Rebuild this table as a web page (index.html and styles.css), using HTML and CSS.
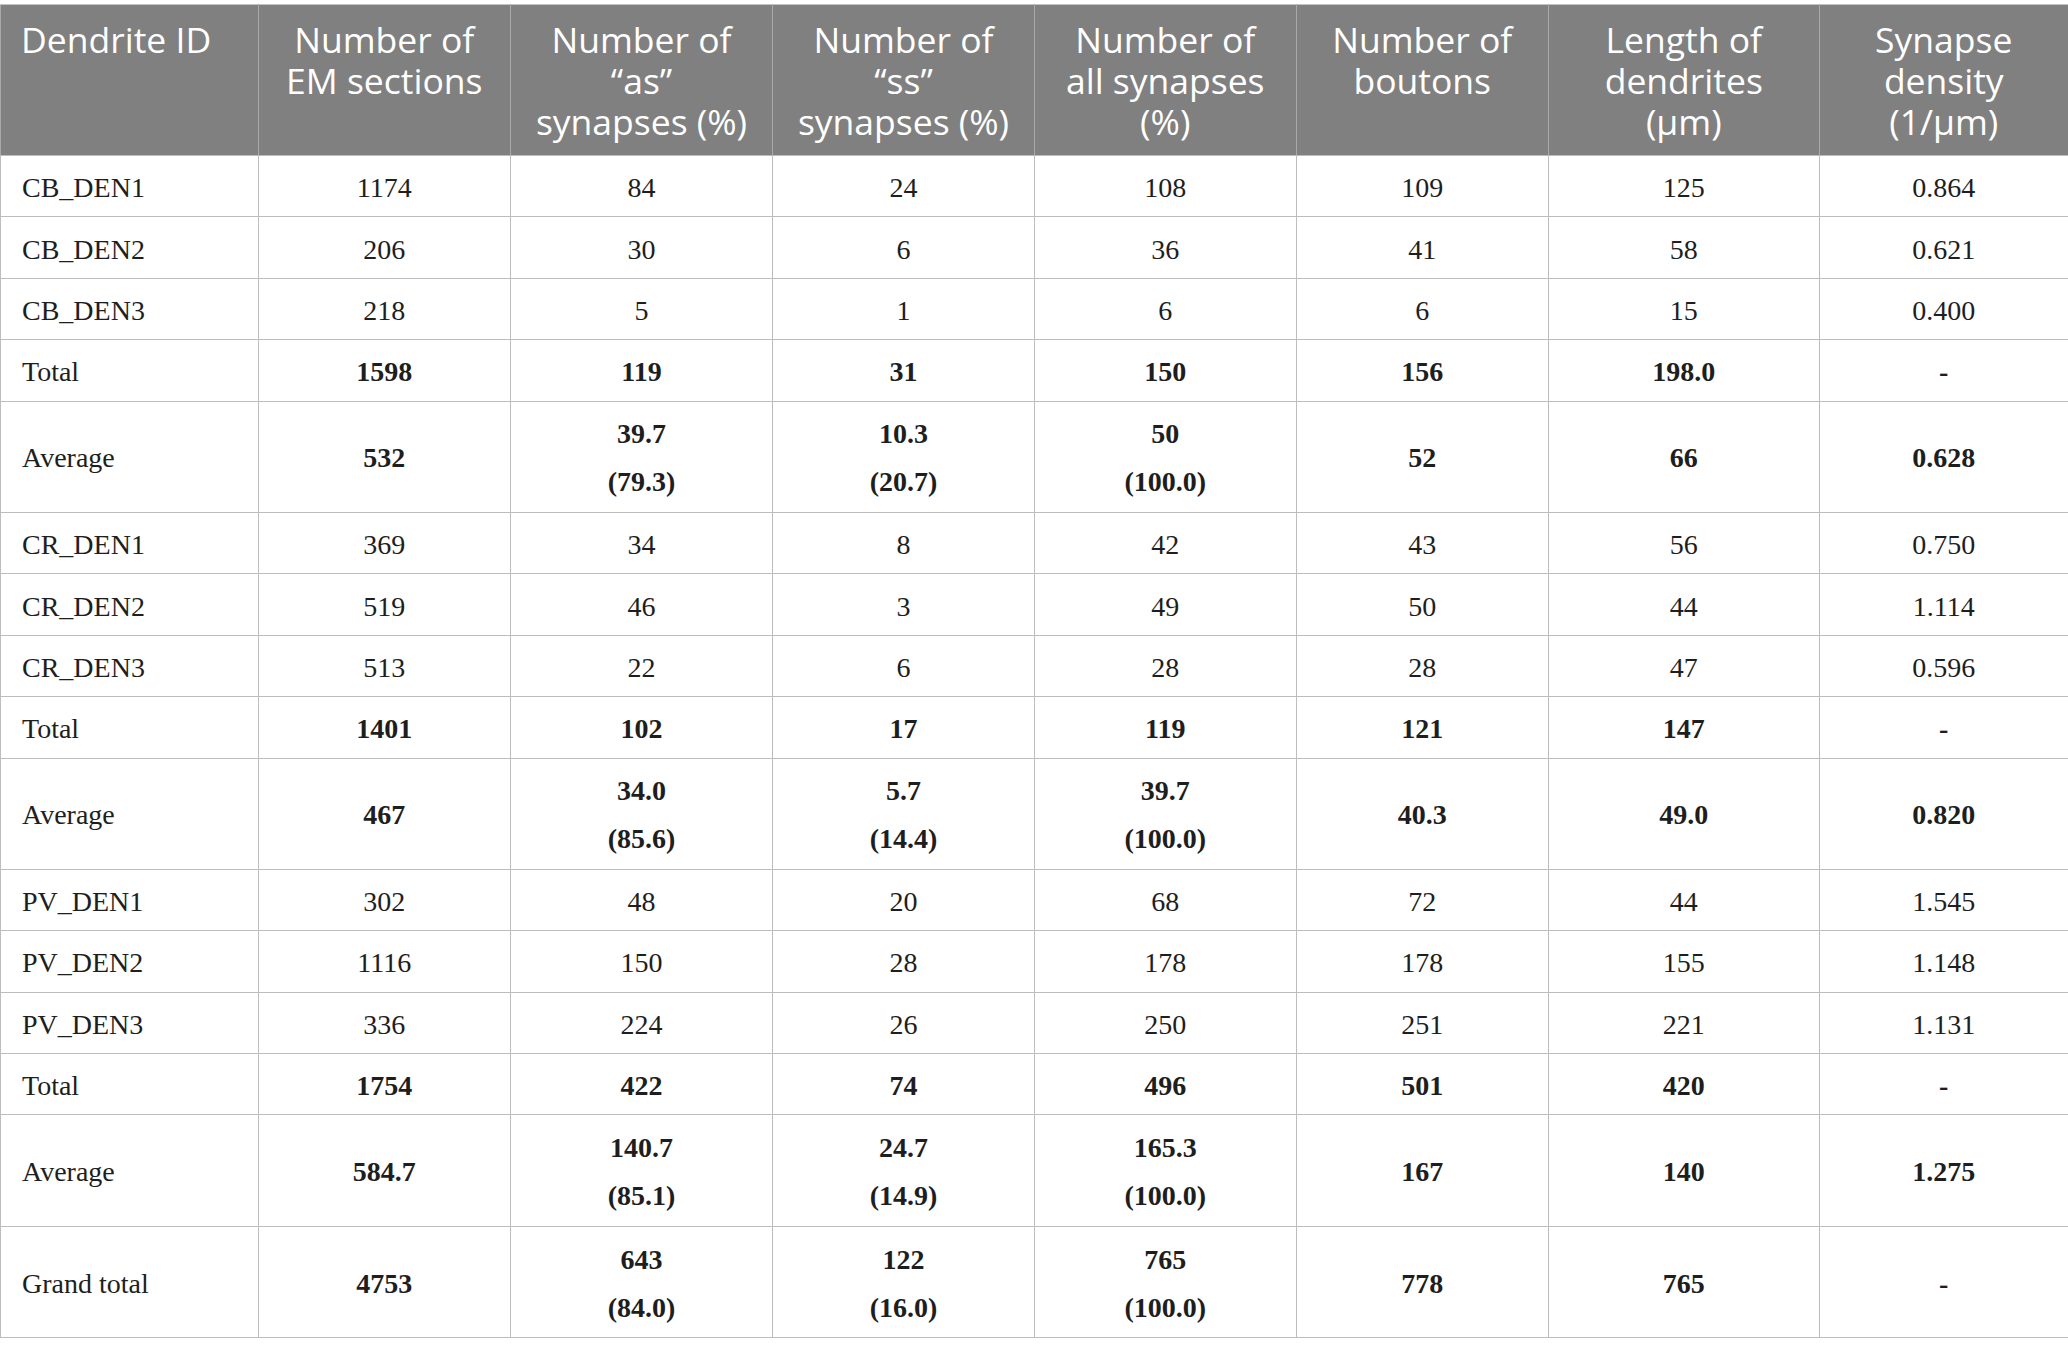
FILE: index.html
```html
<!DOCTYPE html>
<html lang="en">
<head>
<meta charset="utf-8">
<title>Dendrite synapses</title>
<link rel="stylesheet" href="styles.css">
</head>
<body>
<table class="data">
  <colgroup>
    <col class="c1"><col class="c2"><col class="c3"><col class="c4"><col class="c5"><col class="c6"><col class="c7"><col class="c8">
  </colgroup>
  <thead>
    <tr>
      <th class="first">Dendrite ID</th>
      <th>Number of<br>EM sections</th>
      <th>Number of<br>“as”<br>synapses (%)</th>
      <th>Number of<br>“ss”<br>synapses (%)</th>
      <th>Number of<br>all synapses<br>(%)</th>
      <th>Number of<br>boutons</th>
      <th>Length of<br>dendrites<br>(μm)</th>
      <th>Synapse<br>density<br>(1/μm)</th>
    </tr>
  </thead>
  <tbody>
    <tr class="single"><td class="first">CB_DEN1</td><td>1174</td><td>84</td><td>24</td><td>108</td><td>109</td><td>125</td><td>0.864</td></tr>
    <tr class="single"><td class="first">CB_DEN2</td><td>206</td><td>30</td><td>6</td><td>36</td><td>41</td><td>58</td><td>0.621</td></tr>
    <tr class="single"><td class="first">CB_DEN3</td><td>218</td><td>5</td><td>1</td><td>6</td><td>6</td><td>15</td><td>0.400</td></tr>
    <tr class="single sum"><td class="first">Total</td><td>1598</td><td>119</td><td>31</td><td>150</td><td>156</td><td>198.0</td><td>-</td></tr>
    <tr class="double sum"><td class="first">Average</td><td>532</td><td>39.7<br>(79.3)</td><td>10.3<br>(20.7)</td><td>50<br>(100.0)</td><td>52</td><td>66</td><td>0.628</td></tr>
    <tr class="single"><td class="first">CR_DEN1</td><td>369</td><td>34</td><td>8</td><td>42</td><td>43</td><td>56</td><td>0.750</td></tr>
    <tr class="single"><td class="first">CR_DEN2</td><td>519</td><td>46</td><td>3</td><td>49</td><td>50</td><td>44</td><td>1.114</td></tr>
    <tr class="single"><td class="first">CR_DEN3</td><td>513</td><td>22</td><td>6</td><td>28</td><td>28</td><td>47</td><td>0.596</td></tr>
    <tr class="single sum"><td class="first">Total</td><td>1401</td><td>102</td><td>17</td><td>119</td><td>121</td><td>147</td><td>-</td></tr>
    <tr class="double sum"><td class="first">Average</td><td>467</td><td>34.0<br>(85.6)</td><td>5.7<br>(14.4)</td><td>39.7<br>(100.0)</td><td>40.3</td><td>49.0</td><td>0.820</td></tr>
    <tr class="single"><td class="first">PV_DEN1</td><td>302</td><td>48</td><td>20</td><td>68</td><td>72</td><td>44</td><td>1.545</td></tr>
    <tr class="single"><td class="first">PV_DEN2</td><td>1116</td><td>150</td><td>28</td><td>178</td><td>178</td><td>155</td><td>1.148</td></tr>
    <tr class="single"><td class="first">PV_DEN3</td><td>336</td><td>224</td><td>26</td><td>250</td><td>251</td><td>221</td><td>1.131</td></tr>
    <tr class="single sum"><td class="first">Total</td><td>1754</td><td>422</td><td>74</td><td>496</td><td>501</td><td>420</td><td>-</td></tr>
    <tr class="double sum"><td class="first">Average</td><td>584.7</td><td>140.7<br>(85.1)</td><td>24.7<br>(14.9)</td><td>165.3<br>(100.0)</td><td>167</td><td>140</td><td>1.275</td></tr>
    <tr class="double sum"><td class="first">Grand total</td><td>4753</td><td>643<br>(84.0)</td><td>122<br>(16.0)</td><td>765<br>(100.0)</td><td>778</td><td>765</td><td>-</td></tr>
  </tbody>
</table>
</body>
</html>
```

FILE: styles.css
```css
html, body {
  margin: 0;
  padding: 0;
  background: #ffffff;
}

body {
  padding-top: 4px;
}

.data {
  width: 2068px;
  table-layout: fixed;
  border-collapse: collapse;
  font-family: "Liberation Serif", "Times New Roman", serif;
  color: #1e1e1e;
}

.c1 { width: 257.5px; }
.c2 { width: 252.5px; }
.c3 { width: 262px; }
.c4 { width: 262px; }
.c5 { width: 261.5px; }
.c6 { width: 252.5px; }
.c7 { width: 270.5px; }
.c8 { width: 249.5px; }

.data th {
  background: #808080;
  color: #ffffff;
  font-family: "Open Sans", "Noto Sans", sans-serif;
  font-weight: 400;
  font-size: 35.5px;
  line-height: 41px;
  text-align: center;
  vertical-align: top;
  padding: 14px 18px 13px;
  height: 123px;
  white-space: nowrap;
  border-top: 1px solid #c4c4c4;
  border-left: 1px solid #a9a9a9;
  border-right: 1px solid #a9a9a9;
  border-bottom: 1px solid #bcbcbc;
}

.data th.first {
  text-align: left;
  padding-left: 20px;
}

.data td {
  font-size: 28px;
  line-height: 47px;
  text-align: center;
  vertical-align: middle;
  padding: 3px 21px 0;
  border: 1px solid #bdbdbd;
  white-space: nowrap;
}

.data td.first {
  text-align: left;
  font-weight: 400;
}

.single td {
  height: 57.4px;
}

.double td {
  height: 107.4px;
  line-height: 48px;
}

.sum td {
  font-weight: 700;
}

.sum td.first {
  font-weight: 400;
}
```
